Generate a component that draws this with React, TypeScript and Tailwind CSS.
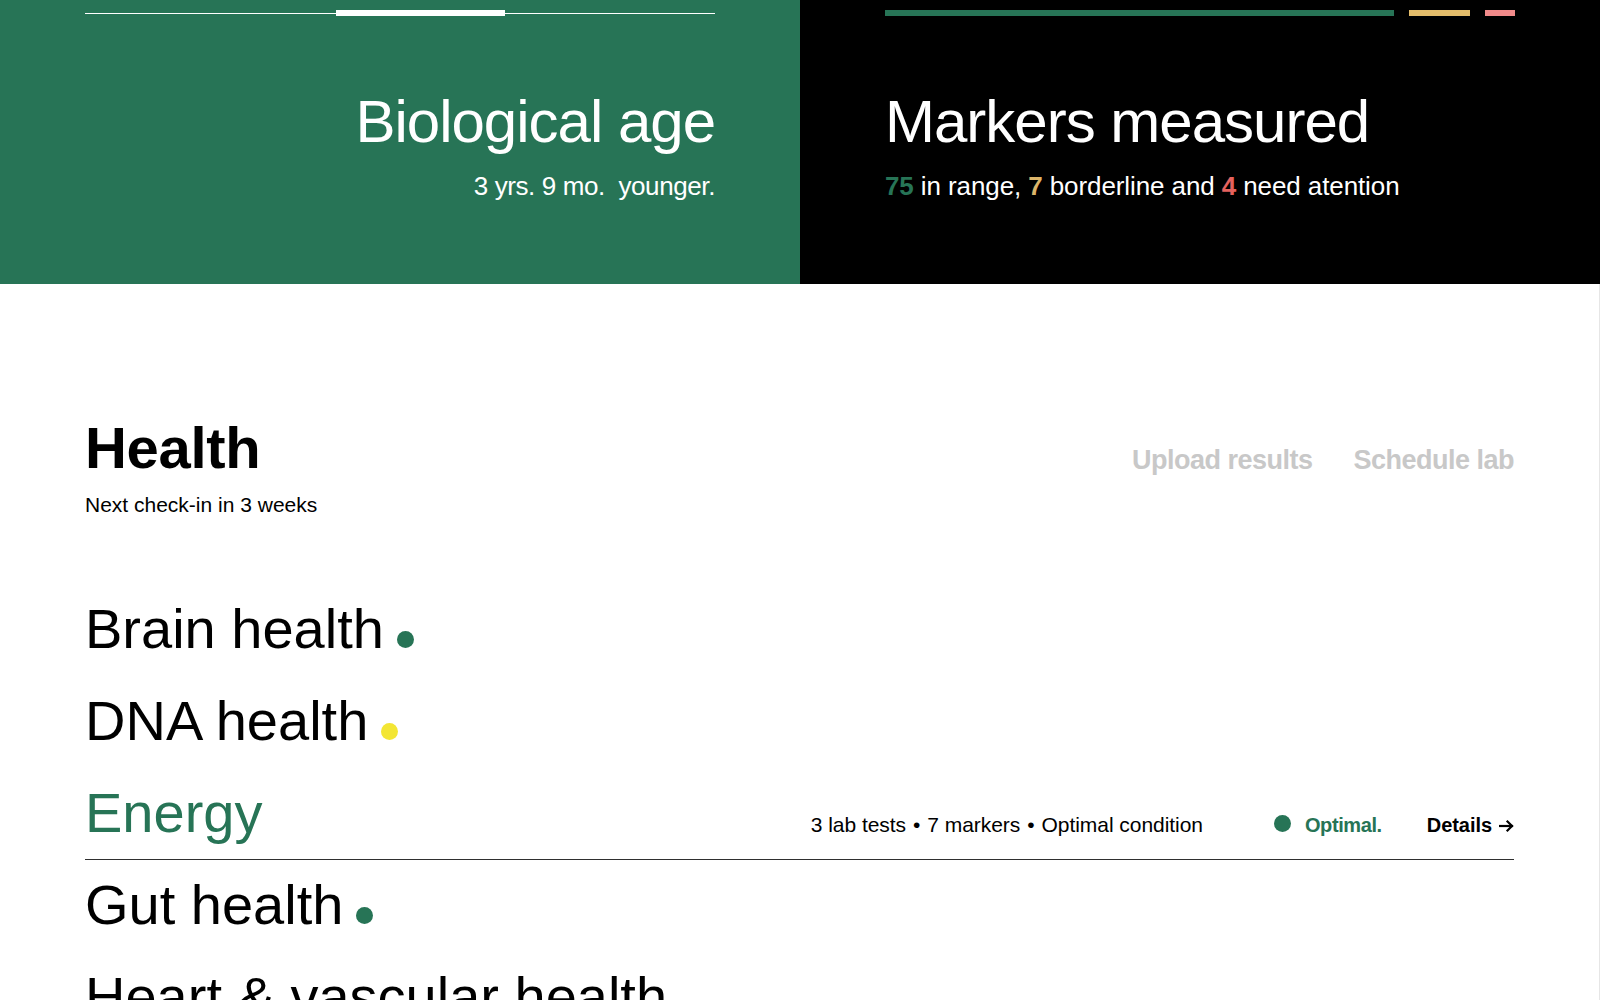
import React from 'react';

const font = { fontFamily: '"Liberation Sans", Arial, sans-serif' };

type Category = {
  name: string;
  dot?: string;
  active?: boolean;
};

const categories: Category[] = [
  { name: 'Brain health', dot: 'bg-[#277456]' },
  { name: 'DNA health', dot: 'bg-[#f3e634]' },
  { name: 'Energy', active: true },
  { name: 'Gut health', dot: 'bg-[#277456]' },
  { name: 'Heart & vascular health' },
];

const Arrow = () => (
  <svg width="15" height="14" viewBox="0 0 15 14" className="inline-block ml-[7px]" fill="none" stroke="currentColor" strokeWidth="2.2" strokeLinecap="square">
    <path d="M1 7h12" />
    <path d="M8.5 2.5 13 7l-4.5 4.5" />
  </svg>
);

const CategoryRow: React.FC<{ item: Category }> = ({ item }) => {
  if (item.active) {
    return (
      <div className="flex items-baseline justify-between pt-[17px] pb-[18px] border-b border-[#2f2f2f]">
        <span className="text-[56px] leading-[56px] text-[#277456]">{item.name}</span>
        <div className="flex items-baseline text-[21px] leading-[21px] tracking-[-0.05px] text-black">
          <span>3 lab tests</span>
          <span className="mx-[7px]">•</span>
          <span>7 markers</span>
          <span className="mx-[7px]">•</span>
          <span>Optimal condition</span>
          <span className="ml-[71px] inline-block w-[17px] h-[17px] rounded-full bg-[#277456]"></span>
          <span className="ml-[14px] font-bold text-[20px] tracking-[-0.4px] text-[#277456]">Optimal.</span>
          <span className="ml-[45px] font-bold text-[20px] flex items-center">
            Details
            <Arrow />
          </span>
        </div>
      </div>
    );
  }
  return (
    <div className="pt-[17px] pb-[19px]">
      <span className="text-[56px] leading-[56px] text-black">{item.name}</span>
      {item.dot && (
        <span className={`ml-[13px] inline-block w-[17px] h-[17px] rounded-full ${item.dot}`}></span>
      )}
    </div>
  );
};

export default function App() {
  return (
    <div className="w-[1600px] min-h-[1000px] bg-white overflow-hidden" style={font}>
      {/* top summary panels */}
      <div className="flex h-[284px]">
        <div className="w-[800px] bg-[#277456] px-[85px] pt-[10px] text-white">
          <div className="flex items-center h-[6px]">
            <div className="w-[251px] h-px bg-white"></div>
            <div className="w-[169px] h-[6px] bg-white"></div>
            <div className="flex-1 h-px bg-white"></div>
          </div>
          <div className="mt-[76px] text-right">
            <h1 className="text-[60px] leading-[60px] tracking-[-1px]">Biological age</h1>
            <p className="mt-[21px] text-[26px] leading-[26px] tracking-[-0.4px]">3 yrs. 9 mo.&nbsp; younger.</p>
          </div>
        </div>
        <div className="w-[800px] bg-black px-[85px] pt-[10px] text-white">
          <div className="flex gap-[15px] h-[6px]">
            <div className="flex-1 bg-[#277456]"></div>
            <div className="w-[61px] bg-[#e4bd6b]"></div>
            <div className="w-[30px] bg-[#f18a8a]"></div>
          </div>
          <div className="mt-[76px]">
            <h1 className="text-[60px] leading-[60px] tracking-[-1px]">Markers measured</h1>
            <p className="mt-[21px] text-[26px] leading-[26px] tracking-[-0.1px]">
              <span className="font-bold text-[#277456]">75</span> in range,{' '}
              <span className="font-bold text-[#dcb56a]">7</span> borderline and{' '}
              <span className="font-bold text-[#e5625e]">4</span> need atention
            </p>
          </div>
        </div>
      </div>

      {/* health section */}
      <div className="px-[85px] pt-[135px] border-r border-[#e6e6e6] min-h-[716px]">
        <div className="flex justify-between items-start">
          <div>
            <h2 className="text-[58px] leading-[58px] font-bold tracking-[-0.3px] text-black">Health</h2>
            <p className="mt-[17px] text-[21px] leading-[21px] text-black">Next check-in in 3 weeks</p>
          </div>
          <div className="flex gap-[41px] mt-[28px] text-[27px] leading-[27px] font-bold tracking-[-0.5px] text-[#c8c8c8]">
            <span>Upload results</span>
            <span>Schedule lab</span>
          </div>
        </div>

        <div className="mt-[69px]">
          {categories.map((c) => (
            <CategoryRow key={c.name} item={c} />
          ))}
        </div>
      </div>
    </div>
  );
}
